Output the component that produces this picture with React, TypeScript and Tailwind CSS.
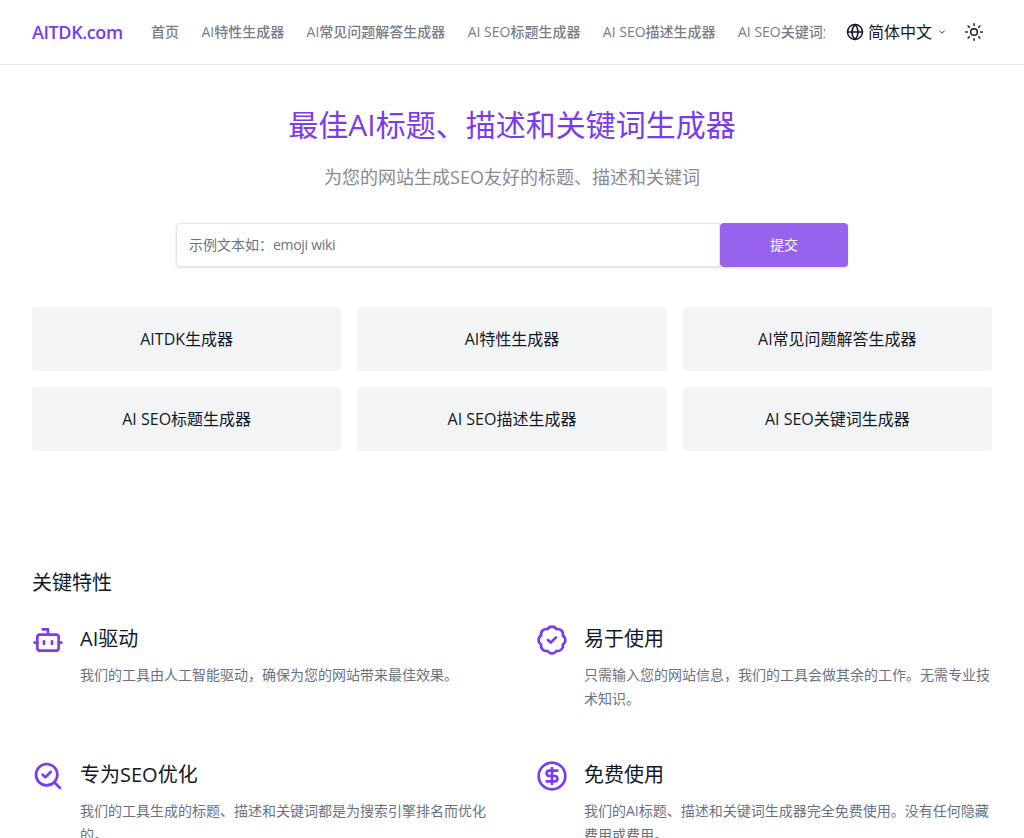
import { Bot, BadgeCheck, SearchCheck, CircleDollarSign, Globe, Sun, ChevronDown } from "lucide-react";

const nav = ["首页", "AI特性生成器", "AI常见问题解答生成器", "AI SEO标题生成器", "AI SEO描述生成器", "AI SEO关键词生成器"];
const cards = ["AITDK生成器", "AI特性生成器", "AI常见问题解答生成器", "AI SEO标题生成器", "AI SEO描述生成器", "AI SEO关键词生成器"];
const features = [
  { icon: Bot, title: "AI驱动", text: "我们的工具由人工智能驱动，确保为您的网站带来最佳效果。" },
  { icon: BadgeCheck, title: "易于使用", text: "只需输入您的网站信息，我们的工具会做其余的工作。无需专业技术知识。" },
  { icon: SearchCheck, title: "专为SEO优化", text: "我们的工具生成的标题、描述和关键词都是为搜索引擎排名而优化的。" },
  { icon: CircleDollarSign, title: "免费使用", text: "我们的AI标题、描述和关键词生成器完全免费使用。没有任何隐藏费用或费用。" },
];

export default function App() {
  return (
    <div className="h-[838px] overflow-hidden bg-white font-['Open_Sans','Noto_Sans_CJK_SC',sans-serif] text-[#111827]">
      <header className="flex h-[65px] items-center border-b border-gray-200 px-8">
        <div className="w-[119px] shrink-0 text-lg font-semibold tracking-[-0.4px] text-[#7c3aed]">AITDK.com</div>
        <nav className="flex w-[674px] shrink-0 gap-[22.4px] overflow-hidden whitespace-nowrap text-sm font-medium text-[#787c85]">
          {nav.map((n) => <span key={n}>{n}</span>)}
        </nav>
        <div className="ml-[21px] flex items-center text-base">
          <Globe className="size-[18px]" strokeWidth={2} />
          <span className="ml-[4px]">简体中文</span>
          <ChevronDown className="ml-[5px] size-[10px]" />
        </div>
        <Sun className="ml-[17px] size-5" strokeWidth={1.75} />
      </header>
      <main className="px-8">
        <section className="pt-[42px] text-center">
          <h1 className="text-3xl leading-9 font-normal text-[#7c3aed]">最佳AI标题、描述和关键词生成器</h1>
          <p className="mt-[20px] text-lg leading-7 text-[#858a94]">为您的网站生成SEO友好的标题、描述和关键词</p>
          <div className="mx-auto mt-[32px] flex h-11 w-[672px] rounded-[4px] text-left shadow-sm">
            <div className="flex grow items-center rounded-l-[4px] border border-gray-200 px-3 text-sm text-gray-500">
              <span>示例文本如：</span>
              <span className="tracking-[-0.3px]">emoji wiki</span>
            </div>
            <button className="w-32 rounded-[4px] bg-[#9763ee] text-sm text-white">提交</button>
          </div>
        </section>
        <section className="mt-10 grid grid-cols-3 gap-4">
          {cards.map((c) => (
            <div key={c} className="flex h-16 items-center justify-center rounded-[4px] bg-gray-100 text-base">{c}</div>
          ))}
        </section>
        <section className="mt-[118px]">
          <h2 className="text-xl leading-7 font-normal">关键特性</h2>
          <div className="mt-[27px] grid grid-cols-2 gap-x-12 gap-y-10">
            {features.map((f) => (
              <div key={f.title} className="flex h-24 gap-4">
                <f.icon className="size-8 shrink-0 text-[#7c3aed]" strokeWidth={2} />
                <div className="pt-px">
                  <h3 className="text-xl leading-7 font-normal">{f.title}</h3>
                  <p className="mt-[10px] text-sm leading-6 text-gray-500">{f.text}</p>
                </div>
              </div>
            ))}
          </div>
        </section>
      </main>
    </div>
  );
}
